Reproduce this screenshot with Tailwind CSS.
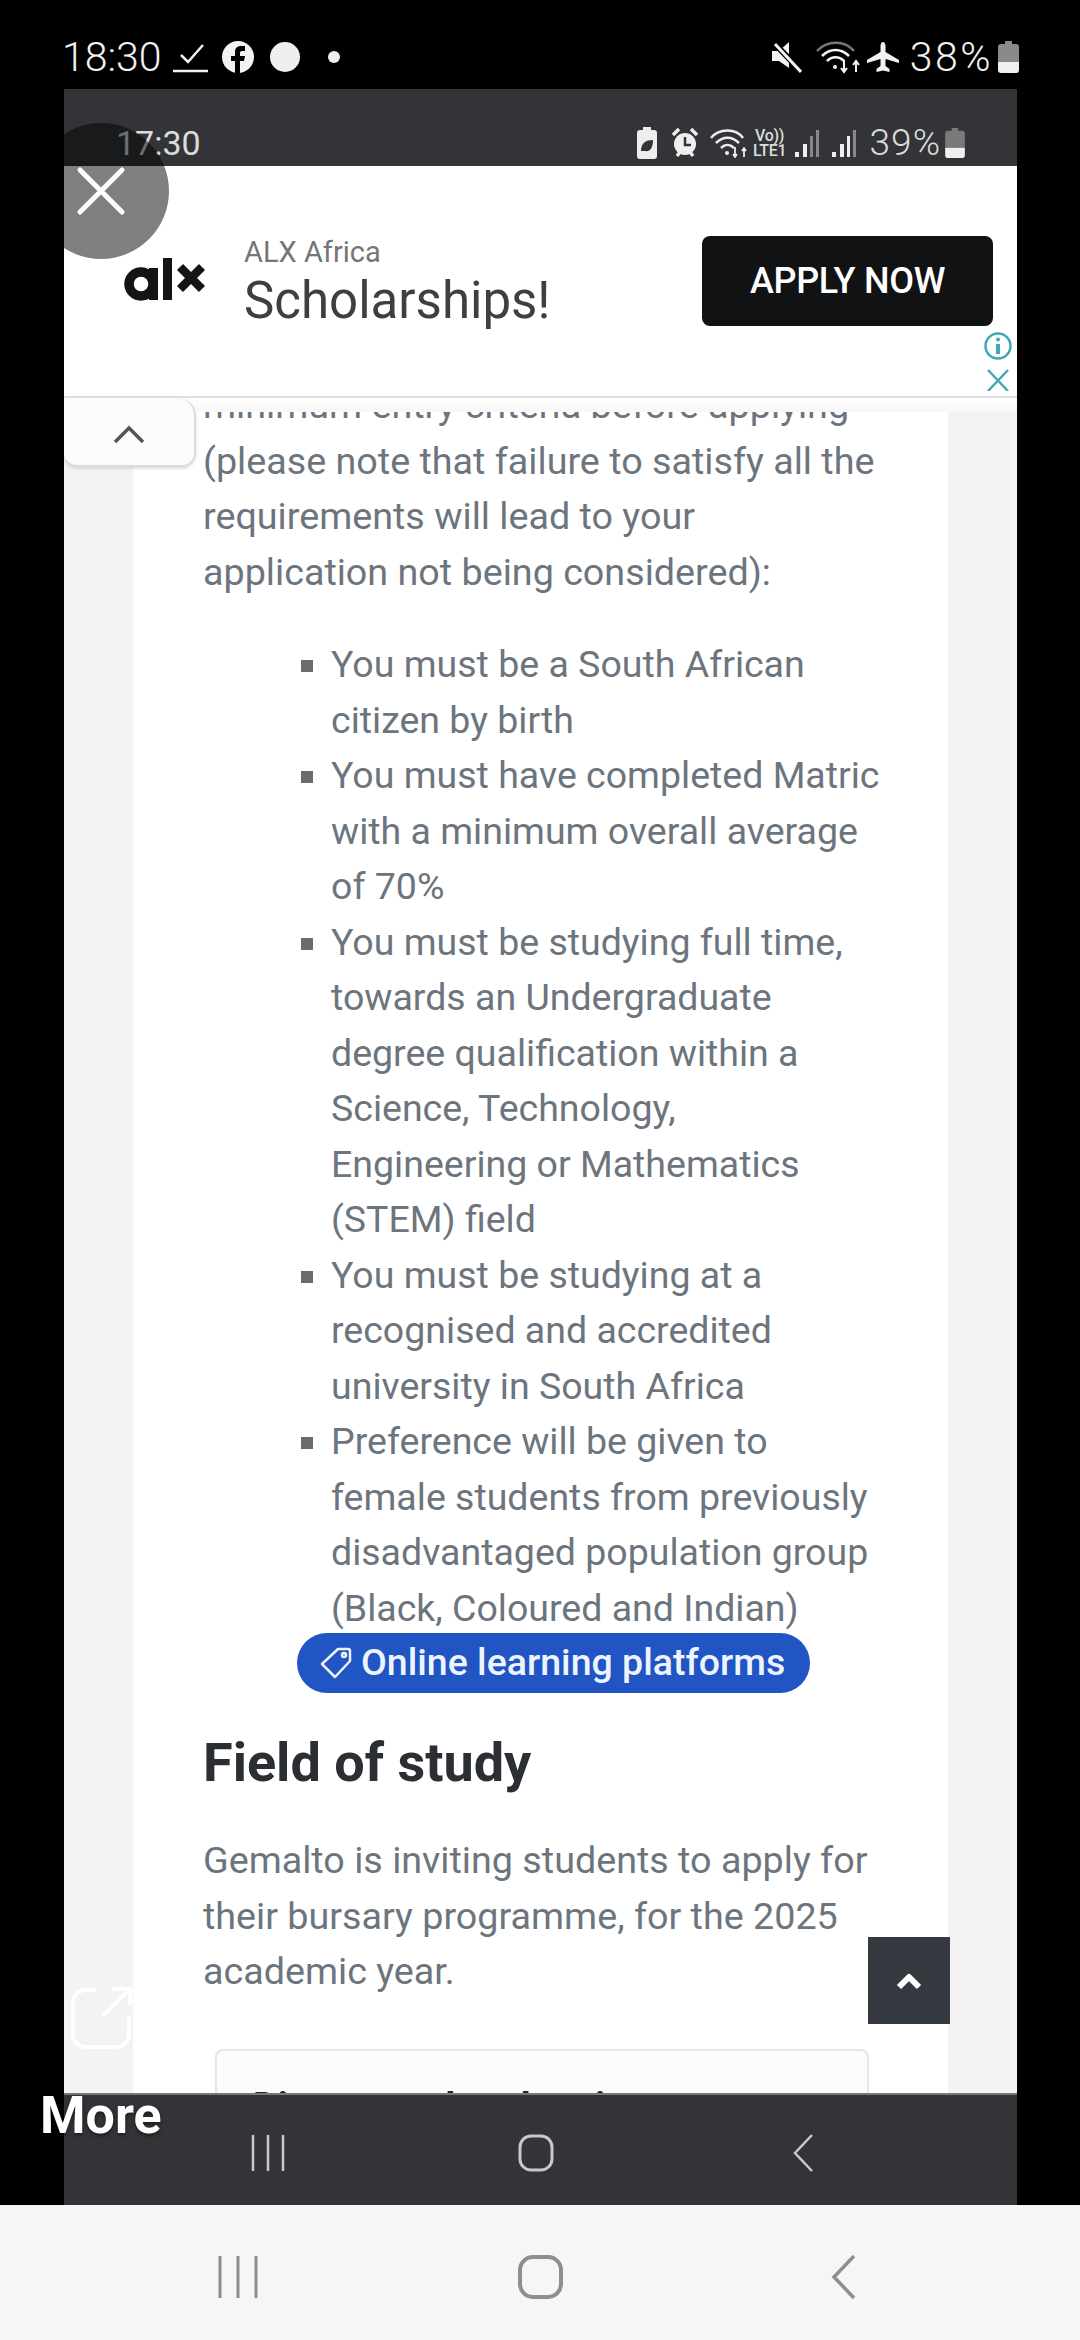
<!DOCTYPE html>
<html lang="en">
<head>
  <meta charset="UTF-8" />
  <meta name="viewport" content="width=device-width, initial-scale=1" />
  <title>Bursary article</title>
  <script src="https://cdn.jsdelivr.net/npm/@tailwindcss/browser@4"></script>
</head>
<body class="relative flex h-[2340px] w-[1080px] flex-col overflow-hidden bg-black font-['Roboto',sans-serif]">
  <!-- outer status bar -->
  <header class="flex h-[89px] shrink-0 items-start justify-between pl-[62px] pr-[61px] pt-[36px] text-[#f2f2f2]">
    <div class="flex items-center">
      <span class="text-[41px] leading-[42px] font-light">18:30</span>
      <svg class="ml-[11px]" width="36" height="32" viewBox="0 0 36 32" fill="none" stroke="#f2f2f2" stroke-width="2.5"><path d="M8 14l7 7L30 4"/><path d="M0 30h35"/></svg>
      <svg class="ml-[12px]" width="34" height="32" viewBox="0 0 34 32"><circle cx="17" cy="16" r="16" fill="#f2f2f2"/><path d="M14 32V20h-4v-5h4v-4c0-4 2.500-6 6-6h4v5h-3c-1.500 0-2 .7-2 2v3h5l-1 5h-4v12z" fill="#000"/></svg>
      <span class="ml-[15px] h-[30px] w-[30px] rounded-full bg-[#efefef]"></span>
      <span class="ml-[28px] h-[12px] w-[12px] rounded-full bg-[#efefef]"></span>
    </div>
    <div class="flex items-center">
      <svg width="30" height="32" viewBox="0 0 30 32"><path d="M0 10h7l10-9v26l-10-7H0z" fill="#f2f2f2"/><path d="M1 1l28 29" stroke="#000" stroke-width="6"/><path d="M3 3l26 28" stroke="#f2f2f2" stroke-width="3"/></svg>
      <svg class="ml-[14px]" width="46" height="34" viewBox="0 0 46 34" fill="none"><path d="M1 11C11 0 29 0 38 11" stroke="#777" stroke-width="2.500"/><path d="M6 16c8-8 19-8 27 0M11 21c5-5 12-5 17 0" stroke="#f2f2f2" stroke-width="2.500"/><circle cx="19" cy="27" r="2" fill="#f2f2f2"/><path d="M28 20v12M25 28l3 4 3-4M40 32V21M37 25l3-4 3 4" stroke="#f2f2f2" stroke-width="2"/></svg>
      <svg class="ml-[5px]" width="32" height="32" viewBox="0 0 32 32"><path d="M16 1c1.500 0 2.500 2 2.500 4v6L32 19v3l-13.500-4v7l4 3v3L16 29.500 9.500 31v-3l4-3v-7L0 22v-3l13.500-8V5c0-2 1-4 2.500-4z" fill="#f2f2f2"/></svg>
      <span class="ml-[11px] text-[41px] leading-[42px] font-light tracking-[2.500px]">38%</span>
      <svg class="ml-[5px]" width="21" height="32" viewBox="0 0 21 32"><path d="M7 0h7v3h4a3 3 0 0 1 3 3v15H0V6a3 3 0 0 1 3-3h4z" fill="#8a8a8a"/><path d="M0 21h21v8a3 3 0 0 1-3 3H3a3 3 0 0 1-3-3z" fill="#f0f0f0"/></svg>
    </div>
  </header>

  <div class="ml-[64px] mr-[63px] flex min-h-0 flex-1 flex-col bg-[#f3f3f3]">
    <!-- inner status bar -->
    <div class="flex h-[77px] shrink-0 items-start justify-between bg-[#333438] pl-[52px] pr-[52px] pt-[36px] text-[#dcdcdc]">
      <span class="text-[34px] leading-[36px]">17:30</span>
      <div class="flex items-center">
        <svg width="20" height="32" viewBox="0 0 20 32"><path d="M6 0h8v3h3a3 3 0 0 1 3 3v23a3 3 0 0 1-3 3H3a3 3 0 0 1-3-3V6a3 3 0 0 1 3-3h3z" fill="#eee"/><path d="M4 24c0-8 5-11 12-11 0 8-3 12-8 11" fill="#333438"/></svg>
        <svg class="ml-[15px]" width="26" height="32" viewBox="0 0 26 32"><circle cx="13" cy="17" r="11" fill="#eee"/><path d="M13 10v8h6" stroke="#333438" stroke-width="2.500" fill="none"/><path d="M1 8l6-6M25 8l-6-6M5 29l3-4M21 29l-3-4" stroke="#eee" stroke-width="3.500"/></svg>
        <svg class="ml-[12px]" width="40" height="30" viewBox="0 0 40 30" fill="none"><path d="M1 10C9 0 26 0 33 10M6 15c7-7 16-7 23 0M11 20c4-4 9-4 13 0" stroke="#eee" stroke-width="2.500"/><circle cx="17" cy="25" r="2" fill="#eee"/><path d="M25 19v10M23 26l2 3 2-3M34 29v-9M32 23l2-3 2 3" stroke="#eee" stroke-width="1.800"/></svg>
        <div class="ml-[2px] w-[36px] text-center text-[16px] leading-[15px] font-medium tracking-[-0.3px]"><div>Vo))</div><div>LTE1</div></div>
        <svg class="ml-[6px]" width="26" height="30" viewBox="0 0 26 30"><rect x="1" y="24" width="4" height="5" fill="#eee"/><rect x="9" y="16" width="4" height="13" fill="#eee"/><rect x="16" y="8" width="3" height="21" fill="#888"/><rect x="22" y="2" width="3" height="27" fill="#888"/></svg>
        <svg class="ml-[11px]" width="26" height="30" viewBox="0 0 26 30"><rect x="1" y="24" width="4" height="5" fill="#eee"/><rect x="9" y="16" width="4" height="13" fill="#eee"/><rect x="16" y="8" width="3" height="21" fill="#eee"/><rect x="22" y="2" width="3" height="27" fill="#888"/></svg>
        <span class="ml-[13px] text-[37px] leading-[36px] font-light tracking-[1px]">39%</span>
        <svg class="ml-[4px]" width="20" height="30" viewBox="0 0 21 32"><path d="M7 0h7v3h4a3 3 0 0 1 3 3v15H0V6a3 3 0 0 1 3-3h4z" fill="#7a7a7a"/><path d="M0 21h21v8a3 3 0 0 1-3 3H3a3 3 0 0 1-3-3z" fill="#f0f0f0"/></svg>
      </div>
    </div>

    <!-- ad banner -->
    <div class="relative z-10 h-[232px] shrink-0 border-b-2 border-[#dedede] bg-white">
      <div class="flex h-full items-start pl-[60px] pt-[68px]">
        <svg class="mt-[24px] shrink-0" role="img" aria-label="alx" width="120" height="44" viewBox="0 0 120 44"><circle cx="17" cy="26" r="12" fill="none" stroke="#141414" stroke-width="9.500"/><rect x="25" y="10" width="9" height="32" fill="#141414"/><rect x="39" y="0" width="9" height="42" fill="#141414"/><path d="M56 9l22 22M78 9L56 31" stroke="#141414" stroke-width="8.500"/></svg>
        <div>
          <p class="text-[29px] leading-[36px] text-[#757575]">ALX Africa</p>
          <p class="mt-[3px] text-[51px] leading-[56px] text-[#3c4043]">Scholarships!</p>
        </div>
        <a class="absolute left-[638px] top-[70px] flex h-[90px] w-[291px] items-center justify-center rounded-[8px] bg-[#111213] text-[36px] font-medium tracking-[-0.3px] text-white">APPLY NOW</a>
      </div>
      <svg class="absolute left-[920px] top-[165px]" width="28" height="60" viewBox="0 0 28 60" fill="none" stroke="#42a7b6"><circle cx="14" cy="15" r="12.500" stroke-width="2.500"/><path d="M14 13v10" stroke-width="4"/><circle cx="14" cy="8.500" r="2" fill="#42a7b6" stroke="none"/><path d="M4 39l20 21M24 39L4 60" stroke-width="2.500"/></svg>
    </div>
    <div class="relative z-10 h-[14px] shrink-0 bg-gradient-to-b from-white to-[#f7f7f7]"></div>

    <!-- article -->
    <main class="relative min-h-0 flex-1 overflow-hidden">
      <article class="ml-[69px] mr-[69px] flow-root h-full bg-white pl-[70px] pr-[64px] text-[37.500px] leading-[55.500px] text-[#6c757d]">
        <div class="-mt-[34px]">
          <p class="text-[37.700px]">minimum entry criteria before applying (please note that failure to satisfy all the requirements will lead to your application not being considered):</p>
          <ul class="mt-[37px] list-[square] pl-[128px] marker:text-[#6b6b6b]">
            <li>You must be a South African citizen by birth</li>
            <li>You must have completed Matric with a minimum overall average of 70%</li>
            <li>You must be studying full time, towards an Undergraduate degree qualification within a Science, Technology,<br />Engineering or Mathematics (STEM) field</li>
            <li>You must be studying at a recognised and accredited university in South Africa</li>
            <li>Preference will be given to female students from previously disadvantaged population group (Black, Coloured and Indian)</li>
          </ul>
          <a class="ml-[94px] -mt-[3px] flex h-[60px] w-[513px] items-center rounded-full bg-[#2055c3] pl-[22px] font-medium text-[#eef4ff]">
            <svg width="34" height="34" viewBox="0 0 34 34" fill="none" stroke="#eef4ff" stroke-width="2.500"><path d="M19 3h10a2 2 0 0 1 2 2v10L16 31 3 18z" stroke-linejoin="round"/><circle cx="25" cy="9" r="2"/></svg>
            <span class="ml-[8px]">Online learning platforms</span>
          </a>
          <h2 class="mt-[38px] text-[54px] leading-[64px] font-bold text-[#2b2f33]">Field of study</h2>
          <p class="mt-[38px] text-[37.700px]">Gemalto is inviting students to apply for their bursary programme, for the 2025 academic year.</p>
          <div class="ml-[12px] mt-[49px] h-[200px] w-[654px] rounded-[8px] border-2 border-[#e6e6e6] bg-[#fbfbfb] pl-[36px] pt-[29px] text-[38px] font-bold text-[#212529]">Discover related topics</div>
        </div>
      </article>
    </main>

    <!-- inner nav -->
    <nav class="relative z-10 flex h-[112px] shrink-0 items-center border-t-2 border-[#77787a] bg-[#333437]">
      <svg class="absolute left-[187px] top-[39px]" width="34" height="38" viewBox="0 0 34 38" stroke="#c9c9c9" stroke-width="2.500"><path d="M2 1v36M17 1v36M32 1v36"/></svg>
      <svg class="absolute left-[454px] top-[39px]" width="36" height="38" viewBox="0 0 36 38" fill="none" stroke="#c9c9c9" stroke-width="3"><rect x="2" y="2" width="32" height="34" rx="11"/></svg>
      <svg class="absolute left-[728px] top-[39px]" width="22" height="38" viewBox="0 0 22 38" fill="none" stroke="#c9c9c9" stroke-width="2.500"><path d="M20 1L3 19l17 18"/></svg>
    </nav>
  </div>

  <!-- outer nav -->
  <footer class="relative flex h-[135px] shrink-0 bg-[#f5f6f8]">
    <svg class="absolute left-[218px] top-[51px]" width="40" height="42" viewBox="0 0 40 42" stroke="#8e8e8e" stroke-width="3"><path d="M2 0v42M20 0v42M38 0v42"/></svg>
    <svg class="absolute left-[518px] top-[50px]" width="45" height="44" viewBox="0 0 45 44" fill="none" stroke="#8e8e8e" stroke-width="4"><rect x="2" y="2" width="41" height="40" rx="13"/></svg>
    <svg class="absolute left-[830px] top-[50px]" width="26" height="44" viewBox="0 0 26 44" fill="none" stroke="#8e8e8e" stroke-width="3.500"><path d="M24 1L4 22l20 21"/></svg>
  </footer>

  <!-- overlays -->
  <div class="absolute left-[64px] top-[123px] z-30 h-[136px] w-[106px] overflow-hidden">
    <div class="absolute -left-[31px] top-0 flex h-[136px] w-[136px] items-center justify-center rounded-full bg-black/50">
      <svg width="50" height="50" viewBox="0 0 50 50" stroke="#fff" stroke-width="5" stroke-linecap="round"><path d="M4 4l42 42M46 4L4 46"/></svg>
    </div>
  </div>

  <div class="absolute left-[64px] top-[398px] z-20 h-[69px] w-[132px] rounded-b-[14px] rounded-tr-[18px] border-b-2 border-r-2 border-[#dcdcdc] bg-[#fcfcfc] shadow-[0_2px_3px_rgba(0,0,0,0.12)]">
    <svg class="absolute left-[49px] top-[26px]" width="32" height="20" viewBox="0 0 32 20" fill="none" stroke="#555" stroke-width="3.500"><path d="M2 18L16 4l14 14"/></svg>
  </div>

  <a class="absolute left-[868px] top-[1937px] z-20 flex h-[87px] w-[82px] items-center justify-center bg-[#343a40]">
    <svg width="26" height="18" viewBox="0 0 26 18" fill="none" stroke="#fff" stroke-width="6" stroke-linejoin="round"><path d="M3 15l10-10 10 10"/></svg>
  </a>

  <svg class="absolute left-[70px] top-[1986px] z-20" width="62" height="64" viewBox="0 0 62 64" fill="none" stroke="#fff" stroke-width="4"><path d="M26 4H16A13 13 0 0 0 3 17v31a13 13 0 0 0 13 13h30a13 13 0 0 0 13-13V30"/><path d="M33 30L60 3M42 3h18v16"/></svg>
  <span class="absolute left-[40px] top-[2085px] z-30 text-[52px] leading-[62px] font-bold text-white [text-shadow:0_2px_4px_rgba(0,0,0,0.5)]">More</span>
</body>
</html>
